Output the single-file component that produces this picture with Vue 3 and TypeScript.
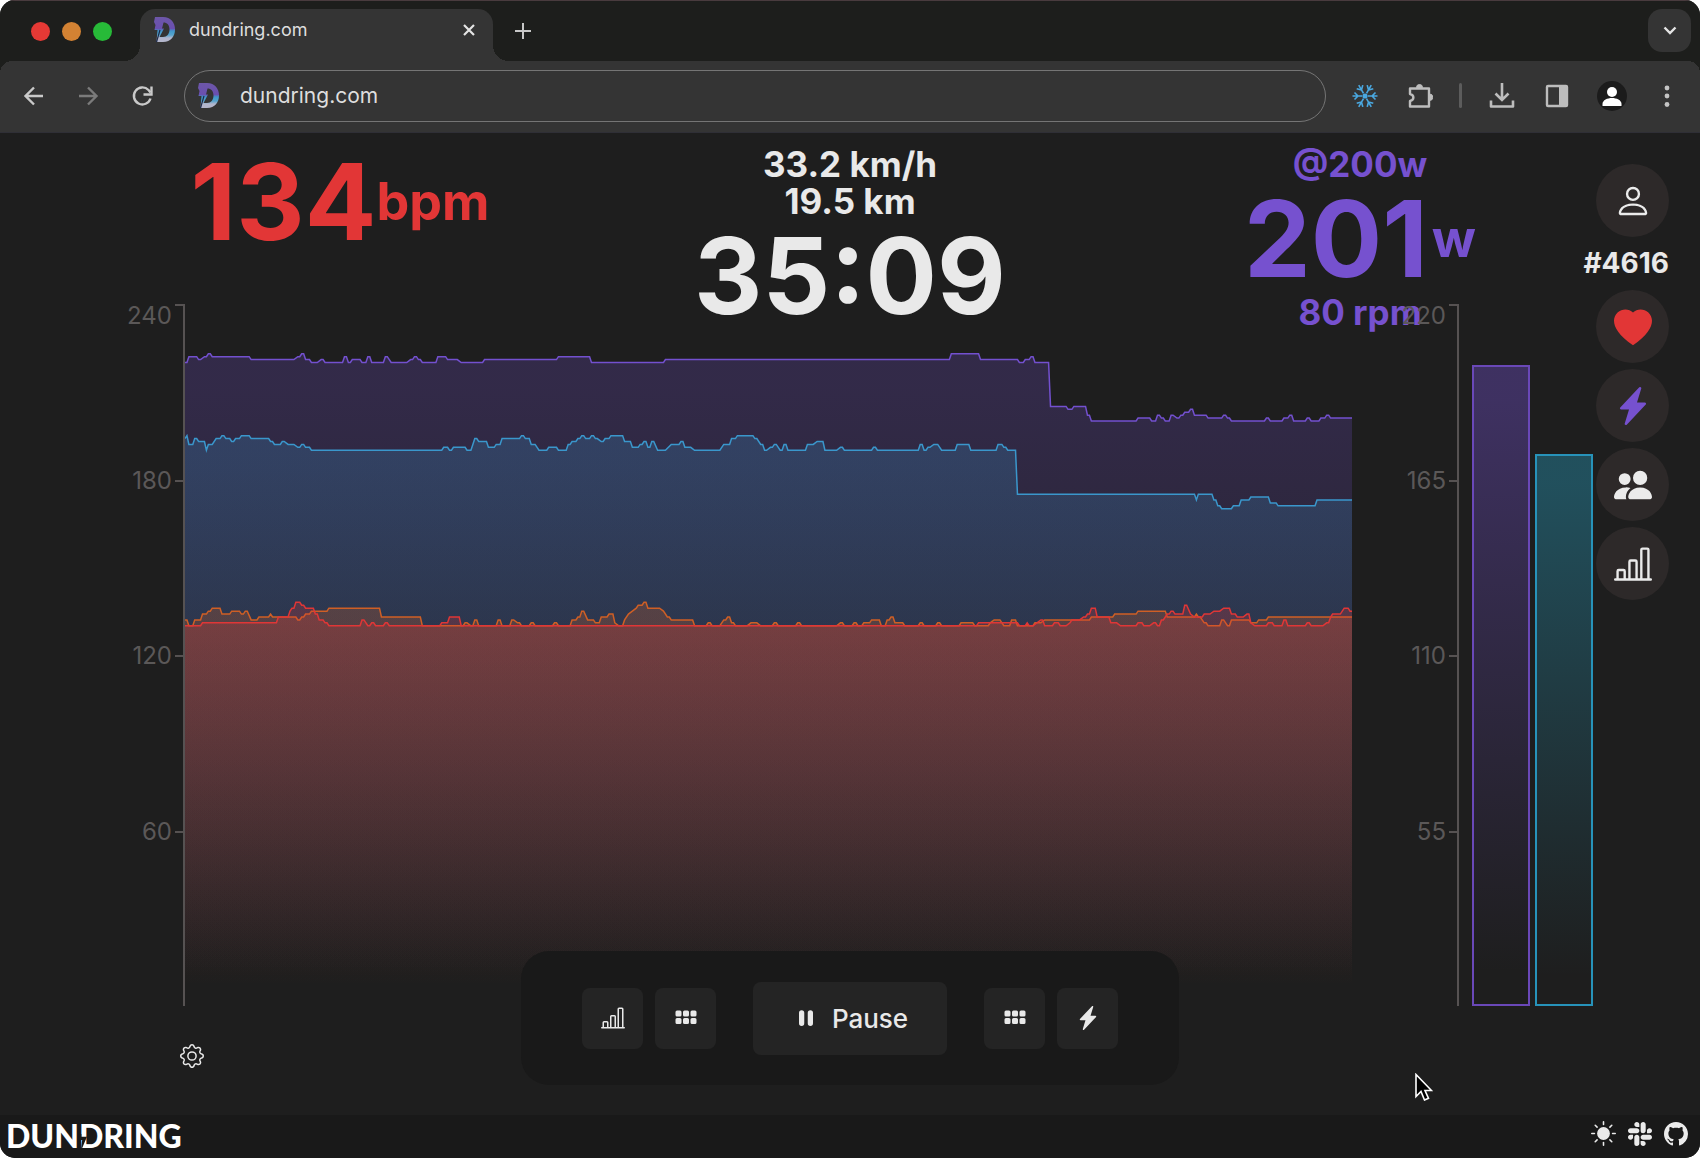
<script setup lang="ts">
import { computed } from 'vue'

interface Series {
  id: string
  color: string
  opacity: number
  points: string
}

interface Shape {
  line: string
  area: string
}

const icons: Record<string, string> = {
  person:
    'M8 8a3 3 0 1 0 0-6 3 3 0 0 0 0 6m2-3a2 2 0 1 1-4 0 2 2 0 0 1 4 0m4 8c0 1-1 1-1 1H3s-1 0-1-1 1-4 6-4 6 3 6 4m-1-.004c-.001-.246-.154-.986-.832-1.664C11.516 10.68 10.289 10 8 10s-3.516.68-4.168 1.332c-.678.678-.83 1.418-.832 1.664z',
  heart: 'M8 1.9C12.438-2.650 23.534 5.3 8 15.700-7.534 5.3 3.562-2.650 8 1.9',
  bolt:
    'M11.251.068a.5.5 0 0 1 .227.58L9.677 6.5H13a.5.5 0 0 1 .364.843l-8 8.5a.5.5 0 0 1-.842-.49L6.323 9.5H3a.5.5 0 0 1-.364-.843l8-8.5a.5.5 0 0 1 .615-.09z',
  people:
    'M7 14s-1 0-1-1 1-4 5-4 5 3 5 4-1 1-1 1zm4-6a3 3 0 1 0 0-6 3 3 0 0 0 0 6m-5.784 6A2.24 2.24 0 0 1 5 13c0-1.355.68-2.75 1.936-3.72A6.3 6.3 0 0 0 5 9c-4 0-5 3-5 4s1 1 1 1zM4.5 8a2.5 2.5 0 1 0 0-5 2.5 2.5 0 0 0 0 5',
  chart:
    'M11 2a1 1 0 0 1 1-1h2a1 1 0 0 1 1 1v12h.5a.5.5 0 0 1 0 1H.5a.5.5 0 0 1 0-1H1v-3a1 1 0 0 1 1-1h2a1 1 0 0 1 1 1v3h1V7a1 1 0 0 1 1-1h2a1 1 0 0 1 1 1v7h1zm1 12h2V2h-2zm-3 0V7H7v7zm-5 0v-3H2v3z',
  grid:
    'M1 4a1 1 0 0 1 1-1h2a1 1 0 0 1 1 1v2a1 1 0 0 1-1 1H2a1 1 0 0 1-1-1zm5 0a1 1 0 0 1 1-1h2a1 1 0 0 1 1 1v2a1 1 0 0 1-1 1H7a1 1 0 0 1-1-1zm5 0a1 1 0 0 1 1-1h2a1 1 0 0 1 1 1v2a1 1 0 0 1-1 1h-2a1 1 0 0 1-1-1zM1 9a1 1 0 0 1 1-1h2a1 1 0 0 1 1 1v2a1 1 0 0 1-1 1H2a1 1 0 0 1-1-1zm5 0a1 1 0 0 1 1-1h2a1 1 0 0 1 1 1v2a1 1 0 0 1-1 1H7a1 1 0 0 1-1-1zm5 0a1 1 0 0 1 1-1h2a1 1 0 0 1 1 1v2a1 1 0 0 1-1 1h-2a1 1 0 0 1-1-1z',
  pause:
    'M5.5 3.5A1.5 1.5 0 0 1 7 5v6a1.5 1.5 0 0 1-3 0V5a1.5 1.5 0 0 1 1.5-1.5m5 0A1.5 1.5 0 0 1 12 5v6a1.5 1.5 0 0 1-3 0V5a1.5 1.5 0 0 1 1.5-1.5',
  gear:
    'M8 4.754a3.246 3.246 0 1 0 0 6.492 3.246 3.246 0 0 0 0-6.492M5.754 8a2.246 2.246 0 1 1 4.492 0 2.246 2.246 0 0 1-4.492 0M9.796 1.343c-.527-1.79-3.065-1.79-3.592 0l-.094.319a.873.873 0 0 1-1.255.52l-.292-.16c-1.64-.892-3.433.902-2.54 2.541l.159.292a.873.873 0 0 1-.52 1.255l-.319.094c-1.79.527-1.79 3.065 0 3.592l.319.094a.873.873 0 0 1 .52 1.255l-.16.292c-.892 1.64.901 3.434 2.541 2.54l.292-.159a.873.873 0 0 1 1.255.52l.094.319c.527 1.79 3.065 1.79 3.592 0l.094-.319a.873.873 0 0 1 1.255-.52l.292.16c1.64.893 3.434-.902 2.54-2.541l-.159-.292a.873.873 0 0 1 .52-1.255l.319-.094c1.79-.527 1.79-3.065 0-3.592l-.319-.094a.873.873 0 0 1-.52-1.255l.16-.292c.893-1.64-.902-3.433-2.541-2.54l-.292.159a.873.873 0 0 1-1.255-.52zm-2.633.283c.246-.835 1.428-.835 1.674 0l.094.319a1.873 1.873 0 0 0 2.693 1.115l.291-.16c.764-.415 1.6.42 1.184 1.185l-.159.292a1.873 1.873 0 0 0 1.116 2.692l.318.094c.835.246.835 1.428 0 1.674l-.319.094a1.873 1.873 0 0 0-1.115 2.693l.16.291c.415.764-.42 1.6-1.185 1.184l-.291-.159a1.873 1.873 0 0 0-2.693 1.116l-.094.318c-.246.835-1.428.835-1.674 0l-.094-.319a1.873 1.873 0 0 0-2.692-1.115l-.292.16c-.764.415-1.6-.42-1.184-1.185l.159-.291A1.873 1.873 0 0 0 1.945 8.93l-.319-.094c-.835-.246-.835-1.428 0-1.674l.319-.094A1.873 1.873 0 0 0 3.06 4.377l-.16-.292c-.415-.764.42-1.6 1.185-1.184l.292.159a1.873 1.873 0 0 0 2.692-1.115z',
  slack:
    'M3.362 10.11c0 .926-.756 1.681-1.681 1.681S0 11.036 0 10.111.756 8.43 1.68 8.43h1.682zm.846 0c0-.924.756-1.68 1.681-1.68s1.681.756 1.681 1.68v4.21c0 .924-.756 1.68-1.68 1.68a1.685 1.685 0 0 1-1.682-1.68zM5.89 3.362c-.926 0-1.682-.756-1.682-1.681S4.964 0 5.89 0s1.68.756 1.68 1.68v1.682zm0 .846c.924 0 1.68.756 1.68 1.681S6.814 7.57 5.89 7.57H1.68C.757 7.57 0 6.814 0 5.89c0-.926.756-1.682 1.68-1.682zm6.749 1.682c0-.926.755-1.682 1.68-1.682S16 4.964 16 5.889s-.756 1.681-1.68 1.681h-1.681zm-.848 0c0 .924-.755 1.68-1.68 1.68A1.685 1.685 0 0 1 8.43 5.89V1.68C8.43.757 9.186 0 10.11 0c.926 0 1.681.756 1.681 1.68zm-1.681 6.748c.926 0 1.682.756 1.682 1.681S11.036 16 10.11 16s-1.681-.756-1.681-1.68v-1.682h1.68zm0-.847c-.924 0-1.68-.755-1.68-1.68s.756-1.681 1.68-1.681h4.21c.924 0 1.68.756 1.68 1.68 0 .926-.756 1.681-1.68 1.681z',
  github:
    'M8 0C3.58 0 0 3.58 0 8c0 3.54 2.29 6.53 5.47 7.59.4.07.55-.17.55-.38 0-.19-.01-.82-.01-1.49-2.01.37-2.53-.49-2.69-.94-.09-.23-.48-.94-.82-1.13-.28-.15-.68-.52-.01-.53.63-.01 1.08.58 1.23.82.72 1.21 1.87.87 2.33.66.07-.52.28-.87.51-1.07-1.78-.2-3.64-.89-3.64-3.95 0-.87.31-1.59.82-2.15-.08-.2-.36-1.02.08-2.12 0 0 .67-.21 2.2.82.64-.18 1.32-.27 2-.27s1.36.09 2 .27c1.53-1.04 2.2-.82 2.2-.82.44 1.1.16 1.92.08 2.12.51.56.82 1.27.82 2.15 0 3.07-1.87 3.75-3.65 3.95.29.25.54.73.54 1.48 0 1.07-.01 1.93-.01 2.2 0 .21.15.46.55.38A8.01 8.01 0 0 0 16 8c0-4.42-3.58-8-8-8',
}

const markBody =
  'M1 0h8c8 0 12 6 12 12.500S17 25 9 25H2.500L3.500 13H.500L1.500 8 0 5zM9.500 5.500L8 11.500h2L5.500 20H9c4 0 6.500-3 6.500-7.500s-2.500-7-6-7z'

// Each series holds "second:value" pairs for the last ten minutes.
const series: Series[] = [
  {
    id: 'power',
    color: '#7350cf',
    opacity: 0.24,
    points:
      '0:220 1:220 2:222 6:222 7:221 8:221 10:222 11:222 12:223 13:223 14:222 33:222 34:221 56:221 58:222 59:222 60:223 61:223 62:221 64:221 65:220 68:220 70:221 71:221 72:220 81:220 82:222 83:222 84:220 85:220 86:221 90:221 91:220 93:220 94:222 95:222 96:220 102:220 103:222 104:222 106:220 114:220 116:221 117:221 118:222 119:222 120:221 121:221 122:220 129:220 130:222 134:222 135:221 140:221 142:220 153:220 154:221 191:221 192:222 208:222 209:220 246:220 247:221 393:221 394:223 408:223 409:221 428:221 429:220 431:220 432:221 434:221 435:222 436:222 437:220 444:220 445:205 453:205 454:204 456:204 457:205 463:205 464:202 465:202 466:200 489:200 490:201 496:201 497:200 499:200 500:202 501:202 502:201 503:201 504:200 506:200 507:202 508:202 510:201 511:201 512:202 513:202 514:203 516:203 517:204 518:204 519:202 525:202 526:201 533:201 534:202 535:202 536:201 537:201 538:200 555:200 556:201 557:201 558:200 564:200 565:201 567:201 568:202 569:202 570:200 576:200 577:201 578:201 579:200 583:200 584:201 586:201 587:202 588:202 589:201 600:201',
  },
  {
    id: 'buddy-power',
    color: '#3a97cc',
    opacity: 0.22,
    points:
      '0:194 1:195 2:192 4:192 5:194 6:194 7:193 10:193 11:190 12:192 14:192 16:194 18:194 19:195 20:195 21:194 23:194 24:193 25:193 26:194 28:194 29:195 33:195 34:194 43:194 44:193 45:193 46:192 49:192 50:193 51:193 53:192 56:192 58:191 59:191 60:192 61:192 62:191 64:191 65:190 132:190 133:191 135:191 136:190 137:190 138:191 144:191 145:190 147:190 148:192 149:194 150:194 151:193 155:193 156:191 159:191 160:192 162:192 163:194 172:194 173:195 174:195 175:194 177:194 178:192 180:192 182:190 186:190 187:191 191:191 192:190 196:190 197:192 198:192 199:193 201:193 202:194 203:194 204:195 205:195 206:194 208:194 209:195 210:195 211:194 212:194 214:193 215:193 216:194 218:194 219:195 225:195 226:193 229:193 230:191 233:191 234:192 235:192 236:193 237:193 238:191 239:191 240:193 241:193 243:190 247:190 250:192 254:192 255:193 256:193 257:191 260:191 262:190 275:190 277:192 280:192 281:194 283:194 284:195 292:195 293:194 294:194 296:192 297:192 298:190 299:190 301:191 302:191 303:192 304:192 306:190 307:190 308:192 309:192 310:190 319:190 320:192 323:192 325:193 328:193 329:190 335:190 337:191 338:191 339:190 353:190 354:191 355:191 356:190 377:190 378:192 379:192 380:190 381:190 382:191 383:191 385:192 387:192 389:190 396:190 397:192 403:192 404:190 417:190 418:192 420:192 421:191 422:191 423:190 427:190 428:175 519:175 520:173 521:175 528:175 529:173 530:173 531:171 532:171 533:170 538:170 539:171 542:171 543:173 547:173 548:174 557:174 558:172 561:172 562:171 581:171 582:173 600:173',
  },
  {
    id: 'buddy-heart',
    color: '#cf5f25',
    opacity: 0.25,
    points:
      '0:132 1:132 2:130 4:130 5:132 8:132 9:134 11:134 12:135 13:135 14:136 18:136 19:134 23:134 24:135 28:135 29:134 30:134 31:135 32:135 34:132 37:132 38:133 43:133 44:134 45:133 57:133 58:132 59:132 60:133 61:133 62:134 64:134 65:135 73:135 74:136 100:136 101:133 121:133 122:130 143:130 144:131 145:131 147:130 148:130 149:132 150:132 151:130 160:130 161:132 162:132 163:130 167:130 168:132 169:132 171:131 172:131 173:130 177:130 178:131 179:131 180:130 189:130 190:131 191:131 192:130 198:130 199:132 201:132 202:133 203:133 204:135 205:135 207:132 210:132 211:131 213:131 214:133 217:133 218:134 220:134 221:131 223:130 225:130 226:132 228:134 230:135 232:136 233:137 235:137 236:138 237:138 238:136 244:136 246:135 248:133 249:133 250:132 261:132 262:130 268:130 269:131 270:131 271:130 275:130 277:132 278:132 279:133 280:133 281:131 282:131 283:130 289:130 291:131 294:131 296:130 302:130 303:131 304:131 305:130 314:130 315:131 316:131 317:130 335:130 337:131 338:131 339:130 343:130 344:131 345:131 346:130 348:130 349:131 352:131 353:132 357:132 358:130 360:130 361:132 362:132 363:133 364:133 365:131 369:131 370:130 377:130 378:131 379:131 380:130 386:130 387:131 388:131 389:130 398:130 399:131 405:131 406:130 413:130 414:131 416:132 419:132 421:130 424:130 425:132 427:132 428:130 436:130 437:131 440:131 442:132 465:132 466:133 477:133 478:134 489:134 490:135 504:135 505:133 519:133 520:134 521:133 522:133 524:131 525:131 526:130 532:130 533:132 534:132 536:130 537:130 538:132 547:132 548:131 551:131 552:132 556:132 557:133 600:133',
  },
  {
    id: 'heart',
    color: '#e03636',
    opacity: 0.23,
    points:
      '0:130 8:130 9:131 47:131 48:133 53:133 54:135 55:136 56:136 57:138 59:138 60:137 61:137 62:136 66:136 67:134 68:134 69:132 71:132 72:131 73:131 74:130 90:130 91:132 92:132 94:130 95:130 96:131 97:131 98:130 102:130 103:131 104:131 105:130 131:130 132:131 135:131 136:133 141:133 142:130 407:130 408:131 428:131 429:130 432:130 433:131 434:130 436:130 440:132 441:132 442:130 446:130 447:131 449:131 450:130 453:130 455:131 456:132 460:132 462:133 463:133 464:134 465:134 466:136 468:136 469:133 475:133 476:131 479:131 481:130 489:130 490:131 492:131 493:130 496:130 498:131 499:131 500:130 501:130 502:132 503:132 505:134 506:134 507:135 508:135 509:134 513:134 514:137 515:137 517:134 519:133 523:133 524:134 527:134 529:135 532:135 534:136 537:136 538:134 540:134 541:133 544:133 546:134 547:134 548:131 550:130 556:130 557:131 559:131 560:130 564:130 565:132 566:132 567:130 576:130 577:131 578:131 579:130 585:130 587:131 588:131 589:133 590:134 594:134 595:135 596:136 598:136 599:135 600:135',
  },
]

const maxValue = 240

function toShape(points: string): Shape {
  const coords = points
    .split(' ')
    .map((pair) => pair.split(':').map(Number))
    .map(([second, value]) => `${second} ${maxValue - value}`)
  const line = `M${coords.join('L')}`
  return { line, area: `${line}V${maxValue}H0Z` }
}

const shapes = computed(() => series.map((s) => ({ ...s, ...toShape(s.points) })))

const leftTicks = [240, 180, 120, 60]
const rightTicks = [220, 165, 110, 55]
const bars = [
  { id: 'me', value: 201 },
  { id: 'buddy', value: 173 },
]

const sideButtons = [
  { icon: 'heart', label: 'Heart rate monitor', tone: 'red' },
  { icon: 'bolt', label: 'Smart trainer', tone: 'purple' },
  { icon: 'people', label: 'Group session', tone: 'light-tone' },
  { icon: 'chart', label: 'Workouts', tone: 'light-tone' },
]
</script>

<template>
  <div class="window">
    <header class="tabs">
      <div class="lights">
        <button class="light close" aria-label="Close window"></button>
        <button class="light minimize" aria-label="Minimize window"></button>
        <button class="light zoom" aria-label="Zoom window"></button>
      </div>
      <div class="tab">
        <svg class="favicon" viewBox="0 0 22 26" aria-hidden="true">
          <defs>
            <linearGradient id="mark" x1="0" y1="0" x2="0" y2="1">
              <stop offset="0" stop-color="#6d57a8" />
              <stop offset="0.46" stop-color="#6a4fb0" />
              <stop offset="0.56" stop-color="#3f97c9" />
              <stop offset="0.72" stop-color="#55a3cc" />
              <stop offset="0.84" stop-color="#b3b6cc" />
              <stop offset="1" stop-color="#b3b6cc" />
            </linearGradient>
          </defs>
          <path fill="url(#mark)" fill-rule="evenodd" :d="markBody" />
          <path d="M6 13L2.500 25" stroke="#1c2a4a" stroke-width="1.200" />
        </svg>
        <span class="tab-title">dundring.com</span>
        <button class="icon-button" aria-label="Close tab">
          <svg viewBox="0 0 14 14" width="14" height="14"><path d="M2 2l10 10M12 2L2 12" stroke="#e4e4e4" stroke-width="2.200" /></svg>
        </button>
      </div>
      <button class="icon-button new-tab" aria-label="New tab">
        <svg viewBox="0 0 16 16" width="16" height="16"><path d="M8 0v16M0 8h16" stroke="#c7c7c7" stroke-width="2" /></svg>
      </button>
      <button class="tab-search" aria-label="Search tabs">
        <svg viewBox="0 0 14 10" width="14" height="10"><path d="M1.500 1.500L7 7l5.500-5.500" fill="none" stroke="#e4e4e4" stroke-width="2.400" /></svg>
      </button>
    </header>

    <nav class="toolbar" aria-label="Browser">
      <button class="icon-button nav" aria-label="Back">
        <svg viewBox="0 0 24 24" width="24" height="24"><path d="M21 12H4M12 3.500L3.500 12l8.500 8.500" fill="none" stroke="#c9c9c9" stroke-width="2.400" /></svg>
      </button>
      <button class="icon-button nav" aria-label="Forward">
        <svg viewBox="0 0 24 24" width="24" height="24"><path d="M3 12h17M12 3.500l8.500 8.500-8.500 8.500" fill="none" stroke="#7b7b7b" stroke-width="2.400" /></svg>
      </button>
      <button class="icon-button nav" aria-label="Reload">
        <svg viewBox="0 0 24 24" width="24" height="24">
          <path d="M20.500 14.500A8.500 8.500 0 1 1 18.500 6l2 2.500" fill="none" stroke="#c9c9c9" stroke-width="2.400" />
          <path d="M21.500 2.500v8h-8" fill="none" stroke="#c9c9c9" stroke-width="2.400" />
        </svg>
      </button>
      <label class="omnibox">
        <svg class="favicon" viewBox="0 0 22 26" aria-hidden="true">
          <path fill="url(#mark)" fill-rule="evenodd" :d="markBody" />
          <path d="M6 13L2.500 25" stroke="#1c2a4a" stroke-width="1.200" />
        </svg>
        <input type="text" value="dundring.com" aria-label="Address" />
      </label>
      <button class="slot" aria-label="Snowflake extension">
        <svg viewBox="-13 -13 26 26" width="26" height="26" fill="none" stroke="#4aa8e0" stroke-width="1.600">
          <g v-for="angle in [0, 60, 120, 180, 240, 300]" :key="angle" :transform="`rotate(${angle})`">
            <path d="M3 0h9.500M7 0l3.500-3.500M7 0l3.500 3.500" />
          </g>
          <circle r="1.800" fill="#4aa8e0" />
        </svg>
      </button>
      <button class="slot" aria-label="Extensions">
        <svg viewBox="0 0 26 26" width="26" height="26">
          <path d="M3 5.500h19v18H3v-5.500c4.500-1 4.500-6 0-7z" fill="none" stroke="#bdbdbd" stroke-width="2.400" stroke-linejoin="round" />
          <path d="M9.500 4.500a3 3 0 0 1 6 0zM22.500 11a3 3 0 0 1 0 6.500z" fill="#bdbdbd" stroke="#bdbdbd" />
        </svg>
      </button>
      <span class="separator"></span>
      <button class="slot" aria-label="Downloads">
        <svg viewBox="0 0 26 26" width="26" height="26" fill="none" stroke="#bdbdbd" stroke-width="2.600">
          <path d="M13 0v17M6.500 10.500L13 17l6.500-6.500" />
          <path d="M2 17.500v6h22v-6" stroke-linejoin="round" />
        </svg>
      </button>
      <button class="slot" aria-label="Side panel">
        <svg viewBox="0 0 24 24" width="24" height="24">
          <rect x="2" y="2" width="20" height="20" rx="1" fill="none" stroke="#bdbdbd" stroke-width="2.400" />
          <path d="M14 2h8v20h-8z" fill="#bdbdbd" />
        </svg>
      </button>
      <button class="slot" aria-label="Profile">
        <svg viewBox="0 0 30 30" width="30" height="30">
          <circle cx="15" cy="15" r="15" fill="#1b1b1b" />
          <circle cx="15" cy="11" r="5" fill="#fff" />
          <path d="M5.500 25v-2c0-4 5-6 9.500-6s9.500 2 9.500 6v2z" fill="#fff" />
        </svg>
      </button>
      <button class="slot" aria-label="Menu">
        <svg viewBox="0 0 6 24" width="6" height="24" fill="#c4c4c4">
          <circle cx="3" cy="4" r="2.400" /><circle cx="3" cy="12" r="2.400" /><circle cx="3" cy="20.500" r="2.400" />
        </svg>
      </button>
    </nav>

    <main class="stage">
      <section class="charts" aria-label="Power and heart rate">
        <ol class="axis">
          <li v-for="tick in leftTicks" :key="tick"><span>{{ tick }}</span></li>
        </ol>
        <svg class="plot" viewBox="0 0 600 240" preserveAspectRatio="none">
          <defs>
            <linearGradient v-for="s in shapes" :id="`fill-${s.id}`" :key="s.id" x1="0" y1="0" x2="0" y2="1">
              <stop offset="0.05" :stop-color="s.color" :stop-opacity="s.opacity" />
              <stop offset="0.95" :stop-color="s.color" stop-opacity="0" />
            </linearGradient>
          </defs>
          <g v-for="s in shapes" :key="s.id">
            <path :d="s.area" :fill="`url(#fill-${s.id})`" />
            <path class="trace" :d="s.line" :stroke="s.color" />
          </g>
        </svg>
        <ol class="axis">
          <li v-for="tick in rightTicks" :key="tick"><span>{{ tick }}</span></li>
        </ol>
        <div class="bars">
          <div v-for="bar in bars" :key="bar.id" class="bar" :class="bar.id" :style="{ height: `${(bar.value / 220) * 100}%` }"></div>
        </div>
      </section>

      <section class="stats" aria-label="Current values">
        <div class="stat heart">
          <p class="big"><span>134</span><span class="unit">bpm</span></p>
        </div>
        <div class="stat">
          <p>33.2 km/h</p>
          <p>19.5 km</p>
          <p class="big">35:09</p>
        </div>
        <div class="stat power">
          <p>@200w</p>
          <p class="big"><span>201</span><span class="unit spaced">w</span></p>
          <p>80 rpm</p>
        </div>
      </section>

      <aside class="side">
        <button class="round light-tone" aria-label="Profile">
          <svg viewBox="0 0 16 16" width="38" height="38"><path :d="icons.person" /></svg>
        </button>
        <p class="room">#4616</p>
        <button v-for="b in sideButtons" :key="b.icon" class="round" :class="b.tone" :aria-label="b.label">
          <svg viewBox="0 0 16 16" width="38" height="38"><path :d="icons[b.icon]" /></svg>
        </button>
      </aside>

      <button class="settings" aria-label="Chart settings">
        <svg viewBox="0 0 16 16" width="24" height="24"><path :d="icons.gear" /></svg>
      </button>

      <section class="controls" aria-label="Workout controls">
        <div class="pair">
          <button class="square" aria-label="Previous part"><svg viewBox="0 0 16 16" width="24" height="24"><path :d="icons.chart" /></svg></button>
          <button class="square" aria-label="Left layout"><svg viewBox="0 0 16 16" width="24" height="24"><path :d="icons.grid" /></svg></button>
        </div>
        <button class="pause">
          <svg viewBox="0 0 16 16" width="28" height="28" aria-hidden="true"><path :d="icons.pause" /></svg>
          Pause
        </button>
        <div class="pair">
          <button class="square" aria-label="Right layout"><svg viewBox="0 0 16 16" width="24" height="24"><path :d="icons.grid" /></svg></button>
          <button class="square" aria-label="Power"><svg viewBox="0 0 16 16" width="24" height="24"><path :d="icons.bolt" /></svg></button>
        </div>
      </section>
    </main>

    <footer class="footer">
      <a class="brand" href="#">DUN<span class="charged">D</span>RING</a>
      <div class="links">
        <button class="icon-button" aria-label="Toggle theme">
          <svg viewBox="-8 -8 16 16" width="25" height="25" fill="#ebebeb" stroke="#ebebeb" stroke-linecap="round">
            <circle r="3.600" />
            <path
              v-for="angle in [0, 45, 90, 135, 180, 225, 270, 315]"
              :key="angle"
              d="M5.800 0h1.700"
              :transform="`rotate(${angle})`"
            />
          </svg>
        </button>
        <a href="#" aria-label="Slack"><svg viewBox="0 0 16 16" width="24" height="24"><path :d="icons.slack" /></svg></a>
        <a href="#" aria-label="GitHub"><svg viewBox="0 0 16 16" width="24" height="24"><path :d="icons.github" /></svg></a>
      </div>
    </footer>

    <svg class="pointer" viewBox="0 0 18 28" width="18" height="28" aria-hidden="true">
      <path d="M1 1.500v22l5-5 3.500 8.500 4-1.700L10 17.500h6.500z" fill="#000" stroke="#fff" stroke-width="1.600" />
    </svg>
  </div>
</template>

<style>
body {
  margin: 0;
  background: #fff;
}
</style>

<style scoped>
.window {
  position: relative;
  display: flex;
  flex-direction: column;
  min-height: 100vh;
  box-sizing: border-box;
  overflow: hidden;
  border-radius: 15px;
  background: #1e1e1e;
  color: #e9e9e9;
  font-family: Inter, "Liberation Sans", sans-serif;
}

button {
  display: flex;
  align-items: center;
  justify-content: center;
  padding: 0;
  border: 0;
  background: none;
  color: inherit;
  font: inherit;
}

p,
ol {
  margin: 0;
  padding: 0;
  list-style: none;
}

svg {
  display: block;
  flex: none;
}

svg:not([fill]) {
  fill: currentColor;
}

/* Browser chrome */

.tabs {
  display: flex;
  align-items: flex-end;
  height: 61px;
  box-sizing: border-box;
  border-top: 1px solid #493b3e;
  background: #1d1e1c;
}

.lights {
  display: flex;
  gap: 12px;
  align-self: center;
  width: 109px;
  padding-left: 31px;
}

.light {
  width: 19px;
  height: 19px;
  border-radius: 50%;
}

.close {
  background: #e53935;
}

.minimize {
  background: #d38233;
}

.zoom {
  background: #27ba38;
}

.tab {
  position: relative;
  display: flex;
  align-items: center;
  width: 353px;
  height: 52px;
  box-sizing: border-box;
  padding: 0 17px 10px 14px;
  border-radius: 15px 15px 0 0;
  background: #343434;
}

.tab::before,
.tab::after {
  content: "";
  position: absolute;
  bottom: 0;
  width: 16px;
  height: 16px;
}

.tab::before {
  right: 100%;
  background: radial-gradient(circle at 0 0, transparent 16px, #343434 16px);
}

.tab::after {
  left: 100%;
  background: radial-gradient(circle at 100% 0, transparent 16px, #343434 16px);
}

.favicon {
  width: 22px;
  height: 26px;
}

.tab-title {
  flex: 1;
  margin-left: 13px;
  color: #dedede;
  font-size: 18px;
  line-height: 22px;
}

.new-tab {
  height: 61px;
  margin-left: 22px;
}

.tab-search {
  width: 43px;
  height: 43px;
  margin: 0 9px 9px auto;
  border-radius: 14px;
  background: #343434;
}

.toolbar {
  display: flex;
  align-items: center;
  height: 72px;
  box-sizing: border-box;
  padding: 0 6px 2px 22px;
  border-bottom: 1px solid #2f2f36;
  background: radial-gradient(circle at 12px 12px, #343434 12px, #1d1e1c 12px) 0 0 / 12px 12px no-repeat,
    radial-gradient(circle at 0 12px, #343434 12px, #1d1e1c 12px) 100% 0 / 12px 12px no-repeat,
    #343434;
}

.nav {
  margin-right: 30px;
}

.omnibox {
  display: flex;
  flex: 1;
  align-items: center;
  gap: 20px;
  height: 52px;
  box-sizing: border-box;
  margin-right: 11px;
  padding: 0 24px 0 13px;
  border: 1px solid #757575;
  border-radius: 26px;
}

.omnibox input {
  flex: 1;
  min-width: 0;
  padding: 0;
  border: 0;
  outline: 0;
  background: none;
  color: #dedede;
  font: 21px / 26px Inter, "Liberation Sans", sans-serif;
}

.slot {
  width: 55px;
  height: 40px;
}

.separator {
  width: 3px;
  height: 25px;
  margin: 0 12px;
  border-radius: 2px;
  background: #5c5c5c;
}

/* Layers of the workout page share one grid cell */

.stage {
  display: grid;
  flex: 1;
  grid-template: minmax(0, 1fr) / minmax(0, 1fr);
  min-height: 640px;
}

.stage > * {
  grid-area: 1 / 1;
}

.charts {
  display: grid;
  grid-template-columns: 185px minmax(0, 1fr) 107px 134px;
  padding: 171px 107px 109px 0;
}

.axis {
  display: flex;
  flex-direction: column;
  box-sizing: border-box;
  border-right: 2px solid #565252;
  color: #5b5858;
  font-size: 24px;
  line-height: 24px;
  text-align: right;
}

.axis li {
  position: relative;
  flex: 1;
  padding-right: 11px;
}

.axis li::after {
  content: "";
  position: absolute;
  top: 0;
  right: 0;
  width: 8px;
  height: 2px;
  background: #565252;
}

.axis li span {
  display: block;
  margin-top: -11px;
}

.axis li:first-child span {
  margin-top: 0;
}

.plot {
  width: 100%;
  height: 100%;
}

.trace {
  fill: none;
  stroke-width: 1.5px;
  vector-effect: non-scaling-stroke;
}

.bars {
  display: flex;
  align-items: flex-end;
  gap: 5px;
  padding-left: 13px;
}

.bar {
  flex: 1;
  box-sizing: border-box;
  border: 2px solid #6a48b8;
  background: linear-gradient(rgb(115 80 207 / 38%) 5%, rgb(115 80 207 / 0%) 95%);
}

.bar.buddy {
  border-color: #2793ba;
  background: linear-gradient(rgb(39 165 200 / 37%) 5%, rgb(39 165 200 / 0%) 95%);
}

.stats {
  display: grid;
  align-self: start;
  grid-template-columns: repeat(3, 1fr);
  width: 90%;
  margin: 13px auto 0;
  font-size: 35px;
  font-weight: 700;
  line-height: 37px;
}

.stat {
  display: flex;
  flex-direction: column;
  align-items: center;
}

.big {
  display: flex;
  align-items: center;
  font-size: 106px;
  line-height: 111px;
}

.unit {
  font-size: 52px;
}

.spaced {
  margin-left: 4px;
}

.heart {
  color: #e23636;
}

.power {
  color: #7651cf;
}

.side {
  display: flex;
  flex-direction: column;
  gap: 6px;
  align-items: flex-end;
  align-self: start;
  justify-self: end;
  margin: 31px 31px 0 0;
}

.round {
  width: 73px;
  height: 73px;
  border-radius: 50%;
  background: #2d2929;
}

.light-tone {
  color: #ebebeb;
}

.red {
  color: #e23636;
}

.purple {
  color: #7651cf;
}

.room {
  font-size: 28px;
  font-weight: 700;
  line-height: 41px;
}

.settings {
  align-self: end;
  justify-self: start;
  margin: 0 0 47px 180px;
}

.controls {
  display: flex;
  gap: 37px;
  align-items: center;
  align-self: end;
  justify-self: center;
  height: 134px;
  box-sizing: border-box;
  margin-bottom: 30px;
  padding: 0 61px;
  border-radius: 28px;
  background: #191919;
}

.pair {
  display: flex;
  gap: 12px;
}

.square {
  width: 61px;
  height: 61px;
  border-radius: 8px;
  background: #242424;
}

.pause {
  gap: 12px;
  width: 194px;
  height: 73px;
  border-radius: 8px;
  background: #242424;
  font-size: 26px;
  font-weight: 500;
}

.footer {
  display: flex;
  align-items: center;
  justify-content: space-between;
  height: 43px;
  box-sizing: border-box;
  padding: 0 12px 6px 6px;
  background: #191919;
}

.brand {
  margin-top: 4px;
  color: #fff;
  font: 900 32px / 36px Lato, Inter, sans-serif;
  text-decoration: none;
}

.charged {
  position: relative;
}

.charged::before {
  content: "";
  position: absolute;
  top: 18px;
  left: 0;
  width: 8px;
  height: 18px;
  background: #191919;
  clip-path: polygon(0 0, 30% 0, 30% 18%, 100% 18%, 22% 100%, 40% 36%, 0 36%);
}

.links {
  display: flex;
  gap: 12px;
  align-items: center;
}

.links a {
  color: #ebebeb;
}

/* Mouse pointer floating over the page */

.pointer {
  position: absolute;
  right: 267px;
  bottom: 57px;
}
</style>
